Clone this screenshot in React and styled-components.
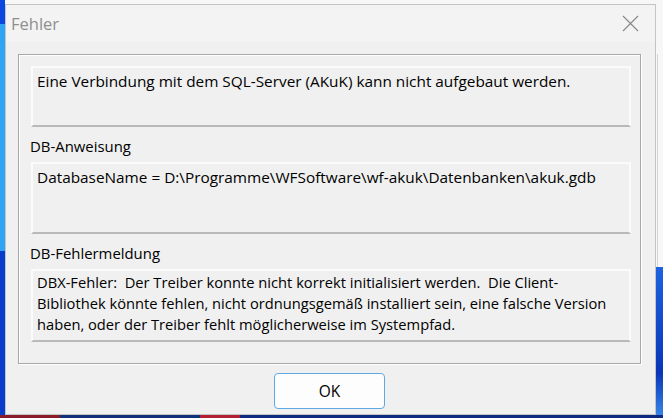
import React from "react";
import styled, { createGlobalStyle } from "styled-components";

const Global = createGlobalStyle`
  html, body { margin: 0; padding: 0; }
  body { width: 663px; height: 418px; overflow: hidden; }
`;

const Desktop = styled.div`
  width: 663px;
  height: 418px;
  box-sizing: border-box;
  padding: 4px 7px 0 5px;
  overflow: hidden;
  background:
    linear-gradient(90deg, #8a1c2a 0 60px, #10307a 60px 200px, #b02030 200px 240px, #0c2a80 240px 100%) left bottom / 100% 3px no-repeat,
    linear-gradient(180deg, #1d63e0, #0a36b8 70%, #3a8ae8) right bottom / 7px 151px no-repeat,
    linear-gradient(#d6d6d6, #d6d6d6) right 5px top 54px / 1px 213px no-repeat,
    linear-gradient(180deg, #0b46e0 0 24px, #2fa4f4 24px 60%, #0a3ccc 60% 100%) left top / 5px 100% no-repeat,
    #f7f7f7;
  font-family: "Open Sans", "Noto Sans", sans-serif;
`;

const Window = styled.div`
  width: 651px;
  height: 411px;
  box-sizing: border-box;
  border: 1px solid #c4c4c4;
  background: #f0f0f0;
  display: flex;
  flex-direction: column;
`;

const TitleBar = styled.div`
  height: 37px;
  flex: none;
  background: #f3f3f3;
  display: flex;
  align-items: center;
  justify-content: space-between;
  padding: 0 16px 0 5px;
`;

const Title = styled.span`
  font-family: "Open Sans", "Noto Sans", sans-serif;
  font-size: 16.5px;
  color: #8f8f8f;
`;

const Body = styled.div`
  padding: 12px 14px 0 12px;
  display: flex;
  flex-direction: column;
  align-items: center;
`;

const Panel = styled.div`
  align-self: stretch;
  box-sizing: border-box;
  height: 310px;
  border: 1px solid #a8a8a8;
  box-shadow: inset 1px 1px 0 #ffffff, 1px 1px 0 #ffffff;
  padding: 11px 9px 0 12px;
  display: flex;
  flex-direction: column;
`;

const Box = styled.div`
  box-sizing: border-box;
  height: ${(p) => p.$h}px;
  border: 2px solid #fbfbfb;
  border-bottom-color: #b9b9b9;
  padding: ${(p) => p.$pt}px 4px 0 4px;
  font-size: ${(p) => p.$fs}px;
  line-height: 21px;
  color: #000;
  white-space: pre;
  overflow: hidden;
`;

const Label = styled.div`
  font-size: 14.9px;
  line-height: 21px;
  color: #000;
  margin: 9px 0 5px -1px;
`;

const OkButton = styled.button`
  margin-top: 9px;
  width: 111px;
  height: 36px;
  box-sizing: border-box;
  border: 1px solid #5fa8e6;
  border-radius: 4px;
  background: #fdfdfd;
  font-family: "Open Sans", "Noto Sans", sans-serif;
  font-size: 15.5px;
  color: #000;
  padding: 0;
`;

const Close = () => (
  <svg width="17" height="17" viewBox="0 0 17 17">
    <path d="M1 1 L16 16 M16 1 L1 16" stroke="#8a8a8a" strokeWidth="1.2" fill="none" />
  </svg>
);

export default function App() {
  return (
    <>
      <Global />
      <Desktop>
        <Window>
          <TitleBar>
            <Title>Fehler</Title>
            <Close />
          </TitleBar>
          <Body>
            <Panel>
              <Box $h={61} $pt={3} $fs={15.35}>
                Eine Verbindung mit dem SQL-Server (AKuK) kann nicht aufgebaut werden.
              </Box>
              <Label>DB-Anweisung</Label>
              <Box $h={72} $pt={3} $fs={15.35}>
                {"DatabaseName = D:\\Programme\\WFSoftware\\wf-akuk\\Datenbanken\\akuk.gdb"}
              </Box>
              <Label>DB-Fehlermeldung</Label>
              <Box $h={73} $pt={1} $fs={14.7}>
                {"DBX-Fehler:  Der Treiber konnte nicht korrekt initialisiert werden.  Die Client-\nBibliothek könnte fehlen, nicht ordnungsgemäß installiert sein, eine falsche Version\nhaben, oder der Treiber fehlt möglicherweise im Systempfad."}
              </Box>
            </Panel>
            <OkButton>OK</OkButton>
          </Body>
        </Window>
      </Desktop>
    </>
  );
}
